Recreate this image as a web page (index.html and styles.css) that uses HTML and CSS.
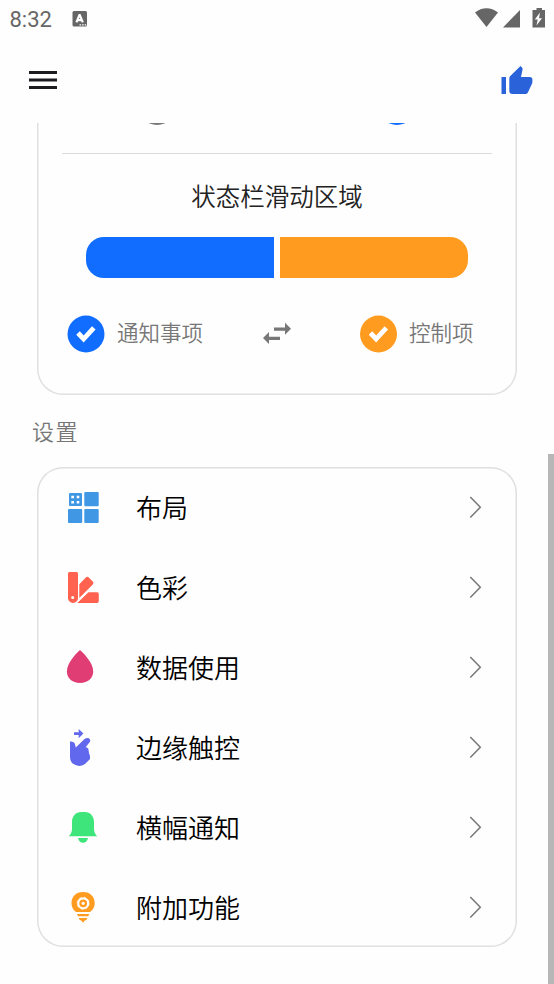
FILE: index.html
```html
<!DOCTYPE html>
<html lang="zh-CN">
<head>
<meta charset="utf-8">
<title>设置</title>
<link rel="stylesheet" href="styles.css">
</head>
<body>
<div class="statusbar">
  <span class="clock">8:32</span>
  <svg class="app-badge" width="16" height="18" viewBox="0 0 16 18"><rect x=".5" y="1" width="14.500" height="15.500" rx="1.500" fill="#666"/><path d="M4.400 12.300 7.400 5h.4l3 7.300M5.600 10.200h4" fill="none" stroke="#fff" stroke-width="2.200"/><path d="M7.500 14.900h1.600m1 0h1.600m1 0h1.500" stroke="#fff" stroke-width="1.300"/></svg>
  <svg class="signals" width="72" height="22" viewBox="0 0 72 22"><g fill="#666"><path d="M1 5.600C8-.1 17-.1 24 5.600L12.500 20Z"/><path d="M29 20.500 46 3v17.500Z"/><path d="M59.500 3h3V1h5.500v2h3v17.500H58.500V3Z"/></g><path d="M66 5.500 60.800 12.500h2.900L62.500 18.500 68 11.200h-3Z" fill="#fff"/></svg>
</div>
<header class="toolbar">
  <svg width="28" height="20" viewBox="0 0 28 20"><path d="M0 2.500h28M0 10h28M0 17.500h28" stroke="#1c1b1f" stroke-width="3"/></svg>
  <svg class="like" width="34" height="30" viewBox="0 0 34 30"><path fill="#2962d9" d="M1.500 12h4.500v17H1.500ZM9.300 13.500c0-1 .4-1.800 1-2.400L20.500 1l1.500 1.500c.5.500.7 1 .6 1.700L21 12H29.800c1.800 0 2.800 1.300 2.600 3v2c0 .4-.1.800-.2 1.200l-4.200 9C27.500 28.400 26.600 29 25.300 29H12.300c-1.700 0-3-1.300-3-3Z"/></svg>
</header>
<main class="content">
  <section class="card zones">
    <div class="choices"><i class="radio"></i><i class="radio on"></i></div>
    <h2 class="title">状态栏滑动区域</h2>
    <div class="split"><span class="left"></span><span class="right"></span></div>
    <div class="legend">
      <svg width="38" height="38" viewBox="0 0 38 38"><circle cx="19" cy="19" r="18.500" fill="#116dff"/><path d="m11 18 5.600 6L26.800 12.800" fill="none" stroke="#fff" stroke-width="4.800"/></svg>
      <span class="first">通知事项</span>
      <svg class="swap" width="30" height="24" viewBox="0 0 30 24"><path fill="#777" d="M12 5.600h11V.8l6 6-6 6V8.800H12ZM18 14.800H7V10L1 16l6 6v-4h11Z"/></svg>
      <svg width="38" height="38" viewBox="0 0 38 38"><circle cx="19.500" cy="19" r="18.500" fill="#ff9b1f"/><path d="m11.500 18 5.600 6L27.300 12.800" fill="none" stroke="#fff" stroke-width="4.800"/></svg>
      <span class="second">控制项</span>
    </div>
  </section>
  <h3 class="section">设置</h3>
  <section class="card menu">
    <div class="row">
      <svg class="icon" viewBox="0 0 40 40"><g fill="#4097e3"><rect x="6" y="6" width="13" height="13" rx="1"/><rect x="21.300" y="5" width="14.400" height="14.200" rx="1"/><rect x="5" y="22" width="14.200" height="14" rx="1"/><rect x="21.300" y="22" width="14.400" height="14" rx="1"/></g><path fill="#fff" d="M8.300 8.700H11v2.600H8.300ZM13.700 8.700h2.600v2.600h-2.600ZM8.300 14H11v2.600H8.300ZM13.700 14h2.600v2.600h-2.600Z"/></svg>
      <span class="label">布局</span><svg class="chevron" viewBox="0 0 14 24"><path d="m1.300 2 10 10.300L1.300 22.500"/></svg>
    </div>
    <div class="row">
      <svg class="icon" viewBox="0 0 40 40"><g fill="#ff624e"><path d="M6.500 5h7Q15 5 15 6.500V31a5 5 0 0 1-10 0V6.500Q5 5 6.500 5ZM16.300 17.200l6.500-6.700q1.500-1.500 3 0l4 4q1.500 1.500 0 3L16.300 31ZM25.500 25.300H34q1.800 0 1.800 1.800v7q0 1.900-1.900 1.900H14.300Z"/></g><circle cx="9.700" cy="30.600" r="1.500" fill="#fff"/></svg>
      <span class="label">色彩</span><svg class="chevron" viewBox="0 0 14 24"><path d="m1.300 2 10 10.300L1.300 22.500"/></svg>
    </div>
    <div class="row">
      <svg class="icon" viewBox="0 0 40 40"><path fill="#e03d74" d="M17 3C22.500 8 30.200 16.500 30.200 24.500 30.200 31 25 36 17 36S3.900 31 3.900 24.500C3.900 16.500 11.500 8 17 3Z"/></svg>
      <span class="label">数据使用</span><svg class="chevron" viewBox="0 0 14 24"><path d="m1.300 2 10 10.300L1.300 22.500"/></svg>
    </div>
    <div class="row">
      <svg class="icon" viewBox="0 0 40 40"><path fill="#6268ed" d="M11 5.200h4.700V2l4.700 4.500-4.700 4.700V8.100H11ZM7 14.500Q10.300 14 11.800 16.500L12.800 20.500 21.500 12Q24 10.300 26 11.200 28 13 26.800 15L22.800 20 25.300 21.500 26 26 27 29V32L22 37Q16 41 10 36.800 7 34.300 7 30Z"/></svg>
      <span class="label">边缘触控</span><svg class="chevron" viewBox="0 0 14 24"><path d="m1.300 2 10 10.300L1.300 22.500"/></svg>
    </div>
    <div class="row">
      <svg class="icon" viewBox="0 0 40 40"><path fill="#3ee57a" d="M9 17V15C9 9 13 5 18 5h4c5 0 9 4 9 10v7c0 3 1.300 5.300 3.200 7.300H5.800C7.700 27.300 9 25 9 22ZM15 31.100h10q-1 4.700-5 4.700t-5-4.700Z"/></svg>
      <span class="label">横幅通知</span><svg class="chevron" viewBox="0 0 14 24"><path d="m1.300 2 10 10.300L1.300 22.500"/></svg>
    </div>
    <div class="row">
      <svg class="icon" viewBox="0 0 40 40"><path fill="#ff9b1f" d="M20 4.900c7.200 0 11.700 4.800 11.700 11 0 4-1.700 7-4.700 9.100H13C10 22.900 8.500 20 8.500 16 8.500 9.700 12.800 4.900 20 4.900ZM14 27h12.200l-1 2.200H15ZM15.800 31h8.600l-1.100 2.200h-1.300L20 35.700l-2-2.500h-1.200Z"/><circle cx="20.200" cy="16.300" r="5" fill="none" stroke="#fff" stroke-width="2.200"/><circle cx="20.200" cy="16.300" r="6.100" fill="none" stroke="#fff" stroke-width=".6" stroke-dasharray="2.400 2.390"/><circle cx="20.200" cy="16.300" r="1.600" fill="#fff"/></svg>
      <span class="label">附加功能</span><svg class="chevron" viewBox="0 0 14 24"><path d="m1.300 2 10 10.300L1.300 22.500"/></svg>
    </div>
  </section>
  <div class="scrollbar"></div>
</main>
</body>
</html>
```
FILE: styles.css
```css
* { box-sizing: border-box; }
body {
  margin: 0;
  height: 984px;
  overflow: hidden;
  display: flex;
  flex-direction: column;
  background: #fefefe;
  font-family: Roboto, "Noto Sans CJK SC DemiLight", "Noto Sans CJK SC", sans-serif;
  font-weight: 350;
}
svg { display: block; flex: none; }
.statusbar {
  height: 38px;
  flex: none;
  display: flex;
  align-items: center;
  padding: 0 8.500px 0 9.500px;
  color: #666;
}
.clock { width: 62.500px; font-size: 22px; font-weight: 400; line-height: 38px; padding-top: 1px; }
.signals { margin-left: auto; margin-top: -3px; }
.toolbar {
  height: 85px;
  flex: none;
  display: flex;
  justify-content: space-between;
  align-items: center;
  padding: 0 20px 2px 29px;
}
.content {
  position: relative;
  flex: 1;
  overflow: hidden;
  padding: 0 37px;
}
.card { box-shadow: inset 0 0 0 1.500px #e0e0e0; }
.zones { height: 302px; margin-top: -30px; border-radius: 26px; padding: 30px 25px 0; }
.choices {
  height: 31px;
  border-bottom: 1px solid #dcdcdc;
  display: flex;
  justify-content: space-between;
  padding: 0 76px;
}
.radio { width: 38px; height: 38px; margin-top: -36px; border-radius: 50%; background: #777; }
.radio.on { background: #116dff; }
.title {
  margin: 26px 0 0;
  font-size: 24.500px;
  line-height: 36px;
  font-weight: 350;
  text-align: center;
  color: #222;
}
.split { display: flex; gap: 6px; margin: 21px 24px 0; height: 41px; }
.split span { flex: 1; }
.left { background: #116dff; border-radius: 18px 0 0 18px; }
.right { background: #ff9b1f; border-radius: 0 18px 18px 0; }
.legend {
  display: flex;
  align-items: center;
  height: 38px;
  margin: 37px 0 0 5px;
  font-size: 21.500px;
  color: #777;
}
.legend span { margin-left: 12px; white-space: nowrap; line-height: 36px; }
.first { width: 145px; }
.swap { margin-right: 67px; }
.section {
  margin: 19px 0 0 -5px;
  height: 53px;
  font-size: 22px;
  line-height: 38px;
  font-weight: 350;
  letter-spacing: 1.500px;
  color: #777;
}
.menu { height: 480px; border-radius: 26px; }
.row {
  display: flex;
  align-items: center;
  height: 80px;
  padding: 0 34px 0 26px;
  font-size: 26px;
  color: #000;
}
.label { padding-bottom: 2px; }
.icon { width: 40px; height: 40px; margin-right: 33px; }
.chevron {
  width: 14px;
  height: 24px;
  margin-left: auto;
  fill: none;
  stroke: #777;
  stroke-width: 1.500;
}
.scrollbar {
  position: absolute;
  right: 0;
  top: 331px;
  bottom: 0;
  width: 6px;
  background: #b7b7b7;
}
```
